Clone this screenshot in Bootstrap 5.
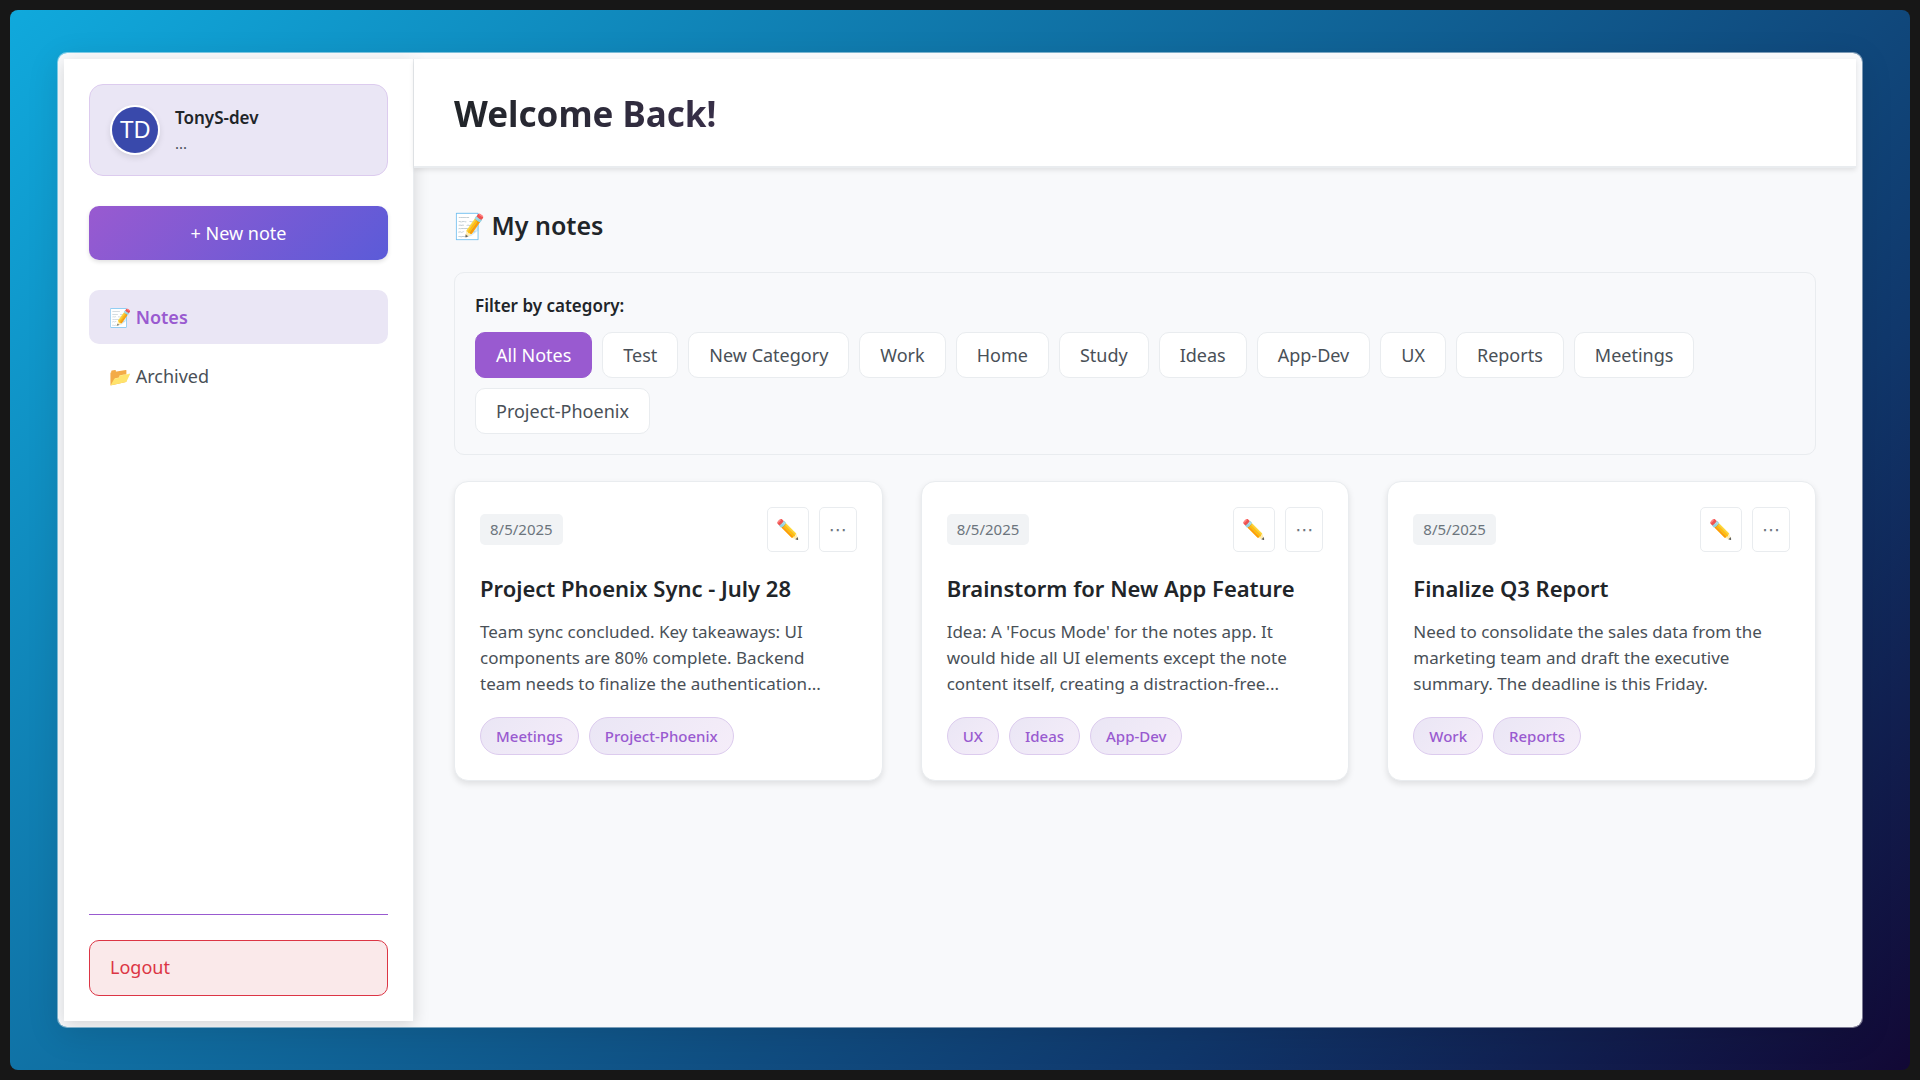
<!DOCTYPE html>
<html lang="en">
<head>
<meta charset="utf-8">
<meta name="viewport" content="width=device-width, initial-scale=1">
<title>Notes</title>
<link href="https://cdn.jsdelivr.net/npm/bootstrap@5.3.0/dist/css/bootstrap.min.css" rel="stylesheet">
<style>
:root { --violet: #995ad0; --lilac: #eae6f5; --line: #e9ecef; --ink: #212529; --soft: #495057; }
body { background: #171717; font-family: "Noto Sans", sans-serif; font-size: 18px; color: var(--ink); padding: 10px; min-height: 100vh; }
.backdrop { border-radius: 8px; background: linear-gradient(135deg, #10a9dc 0%, #10376b 75%, #120835 100%); }
.app-shell { width: calc(100% - 94px); height: 92vh; max-height: calc(92vh - 18px); background: #f8f9fb; border: 1px solid rgba(255,255,255,.45); background-clip: padding-box; border-radius: 10px; padding: 6px; box-shadow: 0 8px 32px rgba(0,0,0,.1); overflow: hidden; }
.side { width: 350px; padding: 25px; background: #fff; border-right: 1px solid var(--line); box-shadow: 0 4px 15px rgba(0,0,0,.15); }
.profile { background: var(--lilac); border: 1px solid #dccbee; border-radius: 14px; padding: 20px; gap: 15px; margin-bottom: 30px; }
.avatar { width: 50px; height: 50px; border: 2px solid #fff; border-radius: 50%; box-shadow: 0 3px 6px rgba(0,0,0,.1); }
.profile-name { font-size: 17px; font-weight: 600; line-height: 26px; }
.profile-mail { font-size: 15px; line-height: 24px; color: var(--soft); }
.btn-new { --bs-btn-color: #fff; --bs-btn-hover-color: #fff; --bs-btn-active-color: #fff; font-size: 18px; height: 54px; border: 0; border-radius: 10px; background: linear-gradient(135deg, #995ad0, #5b5bd8); box-shadow: 0 2px 4px rgba(0,0,0,.12); margin-bottom: 30px; }
.side-nav { gap: 5px; }
.side-nav .nav-link { color: var(--soft); padding: 13px 20px; line-height: 28px; border-radius: 10px; }
.side-nav .nav-link.active { background: var(--lilac); color: var(--violet); font-weight: 600; }
.side-foot { border-top: 1px solid var(--violet); padding-top: 25px; }
.btn-logout { --bs-btn-color: #dc3545; --bs-btn-bg: #fae9ea; --bs-btn-border-color: #dc3545; font-size: 18px; height: 56px; border-radius: 10px; padding: 0 20px; }
.top-bar { height: 109px; padding: 2px 40px 0; background: #fff; border-bottom: 2px solid var(--line); box-shadow: 0 2px 5px rgba(0,0,0,.1); }
.welcome { font-size: 35px; font-weight: 700; background: linear-gradient(90deg, #212529, #995ad0 1400px); -webkit-background-clip: text; background-clip: text; color: transparent; }
.page-body { padding: 39px 40px 0; }
.section-title { font-size: 25px; font-weight: 600; line-height: 36px; margin-bottom: 29px; }
.filter-box { border: 1px solid var(--line); border-radius: 10px; padding: 20px; margin-bottom: 26px; }
.filter-label { font-size: 17px; font-weight: 600; line-height: 26px; margin-bottom: 13px; }
.filter-list { gap: 10px; }
.btn-filter { --bs-btn-color: #495057; --bs-btn-bg: #fff; --bs-btn-border-color: #e9ecef; --bs-btn-active-bg: #995ad0; --bs-btn-active-border-color: #995ad0; --bs-btn-active-color: #fff; font-size: 18px; height: 46px; padding: 0 20px; border-radius: 10px; }
.note-grid { --bs-gutter-x: 38px; }
.note-card { border: 1px solid var(--line); border-radius: 14px; padding: 25px; box-shadow: 0 3px 6px rgba(0,0,0,.1); }
.note-date { font-size: 15px; line-height: 23px; color: #6c757d; background: #f1f3f5; border-radius: 5px; padding: 4px 10px; }
.btn-tool { --bs-btn-color: #6c757d; --bs-btn-border-color: #e9ecef; --bs-btn-bg: #fff; height: 45px; border-radius: 5px; padding: 0 8px; font-size: 19px; line-height: 1; }
.btn-more { font-family: "DejaVu Sans", sans-serif; font-size: 18px; padding: 0 9px; }
.note-title { font-size: 22px; font-weight: 600; line-height: 30px; margin: 21px 0 16px; }
.note-text { font-size: 17px; line-height: 26px; color: var(--soft); padding-right: 10px; margin-bottom: 20px; }
.note-tag { font-size: 15px; font-weight: 500; line-height: 22px; color: var(--violet); background: linear-gradient(135deg, #eae6f5, #f5edf9); border: 1px solid #dccbee; border-radius: 20px; padding: 7px 15px; }
</style>
</head>
<body class="d-flex">
<div class="backdrop flex-fill d-flex align-items-center justify-content-center">
  <div class="app-shell d-flex">
    <aside class="side d-flex flex-column flex-shrink-0">
      <div class="profile d-flex align-items-center">
        <svg class="avatar" viewBox="0 0 46 46" role="img" aria-label="TonyS-dev"><rect width="46" height="46" fill="#3949ab"/><text x="23" y="31" text-anchor="middle" font-family="Liberation Sans, sans-serif" font-size="23" fill="#fff">TD</text></svg>
        <div>
          <div class="profile-name">TonyS-dev</div>
          <div class="profile-mail">...</div>
        </div>
      </div>
      <button type="button" class="btn btn-new w-100">+ New note</button>
      <nav class="side-nav nav flex-column">
        <a class="nav-link active" aria-current="page" href="#">📝 Notes</a>
        <a class="nav-link" href="#">📂 Archived</a>
      </nav>
      <div class="side-foot mt-auto">
        <button type="button" class="btn btn-logout w-100 text-start">Logout</button>
      </div>
    </aside>
    <main class="flex-fill">
      <header class="top-bar d-flex align-items-center"><h1 class="welcome m-0">Welcome Back!</h1></header>
      <div class="page-body">
        <h2 class="section-title">📝 My notes</h2>
        <section class="filter-box" aria-labelledby="filter-label">
          <div class="filter-label" id="filter-label">Filter by category:</div>
          <div class="filter-list d-flex flex-wrap">
            <button type="button" class="btn btn-filter active">All Notes</button>
            <button type="button" class="btn btn-filter">Test</button>
            <button type="button" class="btn btn-filter">New Category</button>
            <button type="button" class="btn btn-filter">Work</button>
            <button type="button" class="btn btn-filter">Home</button>
            <button type="button" class="btn btn-filter">Study</button>
            <button type="button" class="btn btn-filter">Ideas</button>
            <button type="button" class="btn btn-filter">App-Dev</button>
            <button type="button" class="btn btn-filter">UX</button>
            <button type="button" class="btn btn-filter">Reports</button>
            <button type="button" class="btn btn-filter">Meetings</button>
            <button type="button" class="btn btn-filter">Project-Phoenix</button>
          </div>
        </section>
        <div class="row note-grid">
          <div class="col-4">
            <article class="card note-card h-100">
              <div class="d-flex align-items-center justify-content-between">
                <span class="note-date">8/5/2025</span>
                <div class="filter-list d-flex">
                  <button type="button" class="btn btn-tool" aria-label="Edit note">✏️</button>
                  <button type="button" class="btn btn-tool btn-more" aria-label="More options">⋯</button>
                </div>
              </div>
              <h3 class="note-title">Project Phoenix Sync - July 28</h3>
              <p class="note-text">Team sync concluded. Key takeaways: UI components are 80% complete. Backend team needs to finalize the authentication...</p>
              <div class="filter-list d-flex"><span class="note-tag">Meetings</span><span class="note-tag">Project-Phoenix</span></div>
            </article>
          </div>
          <div class="col-4">
            <article class="card note-card h-100">
              <div class="d-flex align-items-center justify-content-between">
                <span class="note-date">8/5/2025</span>
                <div class="filter-list d-flex">
                  <button type="button" class="btn btn-tool" aria-label="Edit note">✏️</button>
                  <button type="button" class="btn btn-tool btn-more" aria-label="More options">⋯</button>
                </div>
              </div>
              <h3 class="note-title">Brainstorm for New App Feature</h3>
              <p class="note-text">Idea: A 'Focus Mode' for the notes app. It would hide all UI elements except the note content itself, creating a distraction-free...</p>
              <div class="filter-list d-flex"><span class="note-tag">UX</span><span class="note-tag">Ideas</span><span class="note-tag">App-Dev</span></div>
            </article>
          </div>
          <div class="col-4">
            <article class="card note-card h-100">
              <div class="d-flex align-items-center justify-content-between">
                <span class="note-date">8/5/2025</span>
                <div class="filter-list d-flex">
                  <button type="button" class="btn btn-tool" aria-label="Edit note">✏️</button>
                  <button type="button" class="btn btn-tool btn-more" aria-label="More options">⋯</button>
                </div>
              </div>
              <h3 class="note-title">Finalize Q3 Report</h3>
              <p class="note-text">Need to consolidate the sales data from the marketing team and draft the executive summary. The deadline is this Friday.</p>
              <div class="filter-list d-flex"><span class="note-tag">Work</span><span class="note-tag">Reports</span></div>
            </article>
          </div>
        </div>
      </div>
    </main>
  </div>
</div>
<script src="https://cdn.jsdelivr.net/npm/bootstrap@5.3.0/dist/js/bootstrap.bundle.min.js"></script>
</body>
</html>
